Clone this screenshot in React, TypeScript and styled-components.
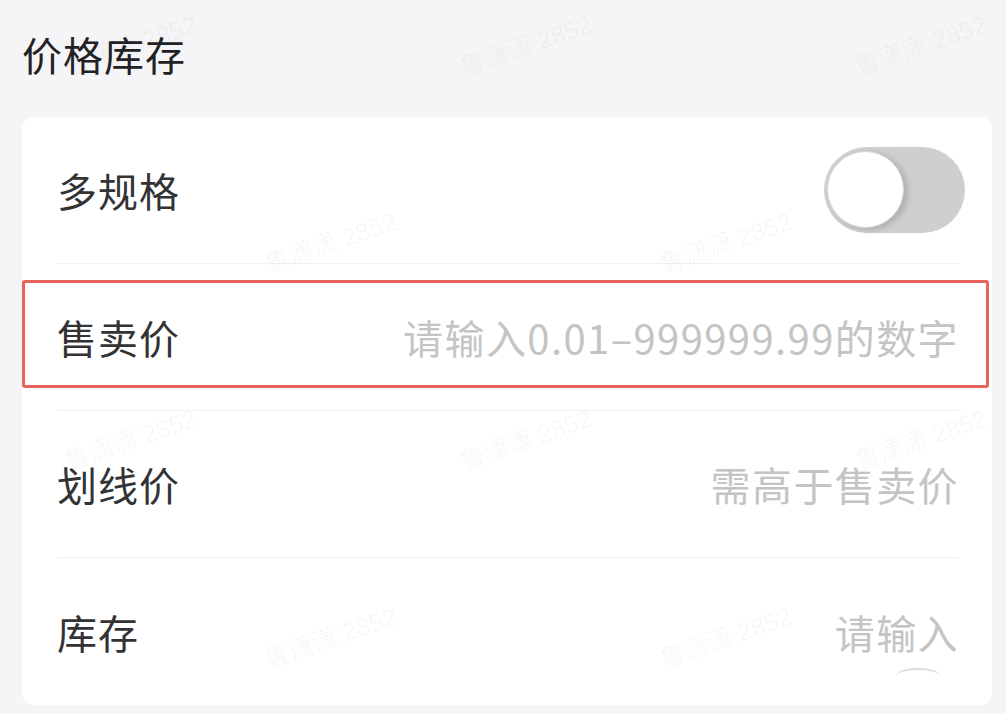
import React from "react";
import styled, { createGlobalStyle, css } from "styled-components";

const GlobalStyle = createGlobalStyle`
  html, body {
    margin: 0;
    padding: 0;
    background: #f5f5f7;
  }
  body {
    font-family: "Noto Sans CJK SC", "Noto Sans", sans-serif;
  }
`;

const Page = styled.main`
  position: relative;
  width: 1006px;
  height: 714px;
  overflow: hidden;
  background: #f5f5f7;
`;

const Title = styled.h2`
  margin: 0;
  padding: 26px 0 0 22px;
  height: 56px;
  font-size: 40px;
  line-height: 56px;
  font-weight: 400;
  letter-spacing: 1px;
  color: #222224;
`;

const Card = styled.section`
  margin: 35px 14px 0 22px;
  background: #ffffff;
  border-radius: 12px;
`;

const Row = styled.div<{ $highlighted?: boolean; $last?: boolean }>`
  position: relative;
  height: 147px;
  margin: 0 34px 0 35px;
  display: flex;
  align-items: center;
  justify-content: space-between;
  border-bottom: ${(p) => (p.$last ? "none" : "1px solid #f0f0f2")};
  box-sizing: border-box;

  ${(p) =>
    p.$highlighted &&
    css`
      &::after {
        content: "";
        position: absolute;
        left: -35px;
        right: -31px;
        top: 16px;
        height: 108px;
        border: 3px solid #e8635c;
        border-radius: 3px;
        box-sizing: border-box;
        pointer-events: none;
      }
    `}
`;

const Label = styled.span`
  font-size: 40px;
  color: #333335;
  line-height: 1;
  letter-spacing: 1px;
`;

const Placeholder = styled.span`
  font-size: 40px;
  color: #c4c4c6;
  line-height: 1;
  letter-spacing: 1.4px;
  margin-right: -1px;
`;

const InputWrap = styled.span`
  position: relative;
  display: inline-flex;
`;

const Caret = styled.span`
  position: absolute;
  right: 18px;
  bottom: -24px;
  width: 44px;
  height: 6px;
  border-top: 2px solid #dcdcde;
  border-radius: 50% 50% 0 0 / 100% 100% 0 0;
`;

const Track = styled.span`
  position: relative;
  display: inline-block;
  width: 141px;
  height: 86px;
  margin-right: -7px;
  border-radius: 43px;
  background: #cfcfd1;
`;

const Knob = styled.span`
  position: absolute;
  left: 3px;
  top: 4px;
  width: 77px;
  height: 77px;
  border-radius: 50%;
  background: #ffffff;
  box-sizing: border-box;
  border: 1px solid #d9d9db;
  box-shadow: 4px 2px 6px rgba(0, 0, 0, 0.16);
`;

const Watermarks = styled.div`
  position: absolute;
  inset: 0;
  pointer-events: none;
`;

const Mark = styled.span`
  position: absolute;
  white-space: nowrap;
  font-family: "Liberation Sans", "Noto Sans CJK SC", sans-serif;
  font-size: 25px;
  font-weight: 400;
  color: rgba(0, 0, 0, 0.04);
  transform: rotate(-19deg);
  transform-origin: left center;
`;

const rowsY = [48, 245, 442, 640];
const marks = rowsY.flatMap((y, i) =>
  (i % 2 === 0 ? [65, 460, 855] : [265, 660]).map((x) => ({ x, y })),
);

function Toggle(): React.JSX.Element {
  return (
    <Track>
      <Knob />
    </Track>
  );
}

export default function App(): React.JSX.Element {
  return (
    <Page>
      <GlobalStyle />
      <Title>价格库存</Title>
      <Card>
        <Row>
          <Label>多规格</Label>
          <Toggle />
        </Row>
        <Row $highlighted>
          <Label>售卖价</Label>
          <Placeholder>请输入0.01–999999.99的数字</Placeholder>
        </Row>
        <Row>
          <Label>划线价</Label>
          <Placeholder>需高于售卖价</Placeholder>
        </Row>
        <Row $last>
          <Label>库存</Label>
          <InputWrap>
            <Placeholder>请输入</Placeholder>
            <Caret />
          </InputWrap>
        </Row>
      </Card>
      <Watermarks>
        {marks.map((m, i) => (
          <Mark key={i} style={{ left: m.x, top: m.y }}>
            鲁潇潇 2852
          </Mark>
        ))}
      </Watermarks>
    </Page>
  );
}
